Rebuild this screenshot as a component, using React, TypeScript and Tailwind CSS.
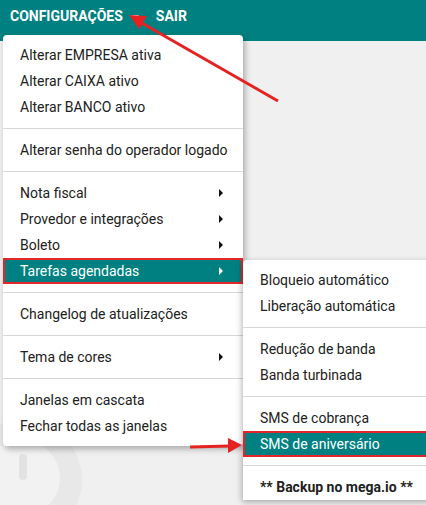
import React from "react";

type Item =
  | { sep: true }
  | { label: string; sub?: boolean; active?: boolean; bold?: boolean; sep?: false };

const MAIN: Item[] = [
  { label: "Alterar EMPRESA ativa" },
  { label: "Alterar CAIXA ativo" },
  { label: "Alterar BANCO ativo" },
  { sep: true },
  { label: "Alterar senha do operador logado" },
  { sep: true },
  { label: "Nota fiscal", sub: true },
  { label: "Provedor e integrações", sub: true },
  { label: "Boleto", sub: true },
  { label: "Tarefas agendadas", sub: true, active: true },
  { sep: true },
  { label: "Changelog de atualizações" },
  { sep: true },
  { label: "Tema de cores", sub: true },
  { sep: true },
  { label: "Janelas em cascata" },
  { label: "Fechar todas as janelas" },
];

const SUB: Item[] = [
  { label: "Bloqueio automático" },
  { label: "Liberação automática" },
  { sep: true },
  { label: "Redução de banda" },
  { label: "Banda turbinada" },
  { sep: true },
  { label: "SMS de cobrança" },
  { label: "SMS de aniversário", active: true },
  { sep: true },
  { label: "** Backup no mega.io **", bold: true },
];

function MenuList({ items, arrowRight }: { items: Item[]; arrowRight?: boolean }) {
  return (
    <>
      {items.map((it, i) =>
        it.sep ? (
          <div key={i} className="my-2 h-px bg-[#d8d8d8]" />
        ) : (
          <div
            key={i}
            className={
              "flex h-[26px] items-center pl-[17px] " +
              (arrowRight ? "pr-[20px] " : "pr-4 ") +
              (it.active
                ? "bg-[#008080] text-white outline-2 -outline-offset-2 outline-[#e3262a]"
                : "text-[#212121]") +
              (it.bold ? " font-bold" : "")
            }
          >
            <span className="flex-1 whitespace-nowrap">{it.label}</span>
            {it.sub && (
              <span
                className={
                  "h-0 w-0 border-y-[4px] border-l-[4px] border-y-transparent " +
                  (it.active ? "border-l-white" : "border-l-[#111]")
                }
              />
            )}
          </div>
        )
      )}
    </>
  );
}

export default function App() {
  return (
    <div
      className="relative h-[505px] w-[426px] overflow-hidden bg-[#f0f0f0] text-[14px]"
      style={{ fontFamily: "Roboto, 'Noto Sans', sans-serif" }}
    >
      {/* top bar */}
      <div className="flex h-[41px] items-start gap-[17px] bg-[#008080] pl-[10px] pt-[6px] font-bold text-white">
        <div className="flex items-center gap-[8px] leading-5">
          <span>CONFIGURAÇÕES</span>
          <span className="mt-[1px] h-0 w-0 border-x-[4px] border-t-[4px] border-x-transparent border-t-white" />
        </div>
        <span className="leading-5">SAIR</span>
      </div>

      {/* watermark */}
      <svg className="absolute left-0 top-[420px]" width="140" height="85" viewBox="0 0 140 85">
        <circle cx="22" cy="60" r="60" fill="#e8e8e8" />
        <circle cx="22" cy="58" r="38" fill="#f2f2f2" />
        <rect x="19" y="34" width="8" height="26" rx="4" fill="#e2e2e2" />
      </svg>

      {/* main dropdown */}
      <div className="absolute left-[3px] top-[35px] w-[240px] rounded-[4px] bg-white pt-[7px] pb-[7px] shadow-[2px_3px_6px_rgba(0,0,0,0.3)]">
        <MenuList items={MAIN} arrowRight />
      </div>

      {/* submenu */}
      <div className="absolute left-[243px] top-[260px] w-[200px] rounded-tl-[4px] bg-white pt-[7px] shadow-[-1px_2px_6px_rgba(0,0,0,0.3)]">
        <MenuList items={SUB} />
      </div>

      {/* annotation arrows */}
      <svg className="pointer-events-none absolute inset-0" width="426" height="505">
        <line x1="278" y1="101" x2="140" y2="22" stroke="#e52222" strokeWidth="3" />
        <polygon points="129,15 147,16 139,29" fill="#e52222" />
        <line x1="190" y1="447" x2="230" y2="446" stroke="#e52222" strokeWidth="3" />
        <polygon points="242,445 228,438 228,453" fill="#e52222" />
      </svg>
    </div>
  );
}
